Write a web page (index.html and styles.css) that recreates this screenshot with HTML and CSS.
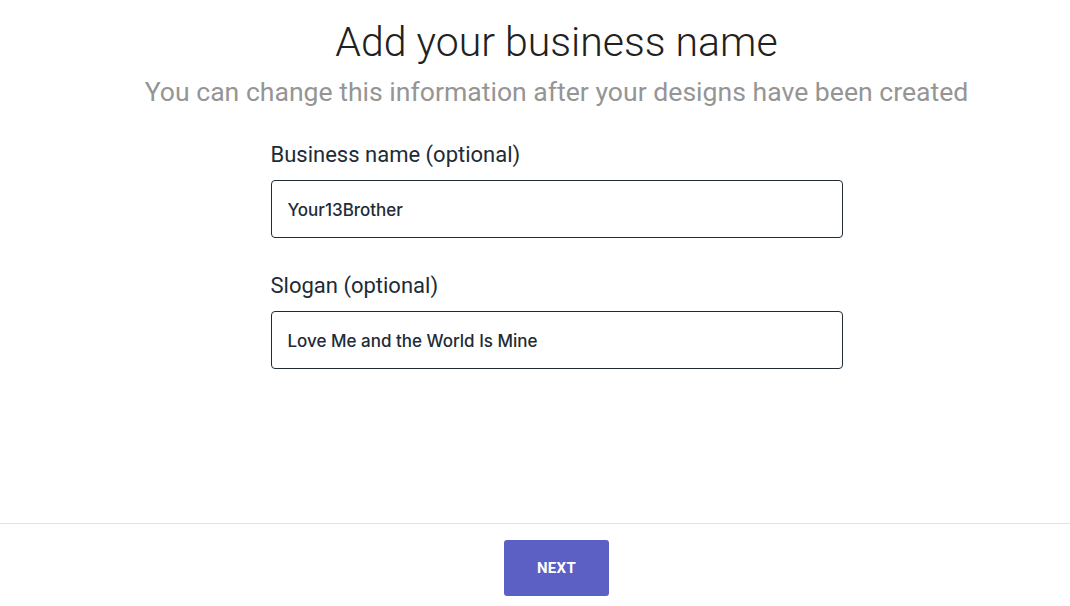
FILE: index.html
```html
<!DOCTYPE html>
<html lang="en">
<head>
<meta charset="utf-8">
<title>Add your business name</title>
<link rel="stylesheet" href="styles.css">
</head>
<body>
<div class="page">
  <main class="main">
    <h1 class="title">Add your business name</h1>
    <p class="subtitle">You can change this information after your designs have been created</p>
    <form class="form">
      <label class="field">
        <span class="label">Business name (optional)</span>
        <input class="input" type="text" value="Your13Brother">
      </label>
      <label class="field">
        <span class="label">Slogan (optional)</span>
        <input class="input" type="text" value="Love Me and the World Is Mine">
      </label>
    </form>
  </main>
  <footer class="footer">
    <button class="next" type="button">NEXT</button>
  </footer>
</div>
</body>
</html>
```
FILE: styles.css
```css
html, body {
  margin: 0;
  padding: 0;
  background: #ffffff;
}
body {
  font-family: Roboto, "Liberation Sans", sans-serif;
  color: #212b36;
}
.page {
  height: 606px;
  display: flex;
  flex-direction: column;
}
.main {
  flex: 1;
  display: flex;
  flex-direction: column;
  align-items: center;
  padding-left: 43px;
}
.title {
  margin: 16px 0 0;
  font-size: 41px;
  font-weight: 300;
  line-height: 52px;
  color: #212121;
}
.subtitle {
  margin: 0;
  font-size: 26.6px;
  font-weight: 400;
  line-height: 48px;
  color: #959595;
}
.form {
  width: 572px;
  margin-top: 21px;
  display: flex;
  flex-direction: column;
  gap: 30px;
}
.field {
  display: flex;
  flex-direction: column;
}
.label {
  font-size: 22px;
  line-height: 36px;
  color: #212b36;
  margin-bottom: 7px;
}
.input {
  box-sizing: border-box;
  height: 58px;
  width: 100%;
  border: 1px solid #212b36;
  border-radius: 4px;
  padding: 1px 16px 0;
  font-family: Inter, Roboto, sans-serif;
  font-size: 17px;
  font-weight: 500;
  color: #212b36;
  outline: none;
}
.footer {
  border-top: 1px solid #e1e3e5;
  height: 83px;
  display: flex;
  justify-content: center;
  align-items: flex-start;
  padding-top: 16px;
  padding-left: 43px;
  box-sizing: border-box;
}
.next {
  width: 105px;
  height: 56px;
  border: none;
  border-radius: 3px;
  background: #5c5fc4;
  color: #ffffff;
  font-family: Roboto, sans-serif;
  font-size: 15px;
  font-weight: 700;
  letter-spacing: 0.3px;
}
```
